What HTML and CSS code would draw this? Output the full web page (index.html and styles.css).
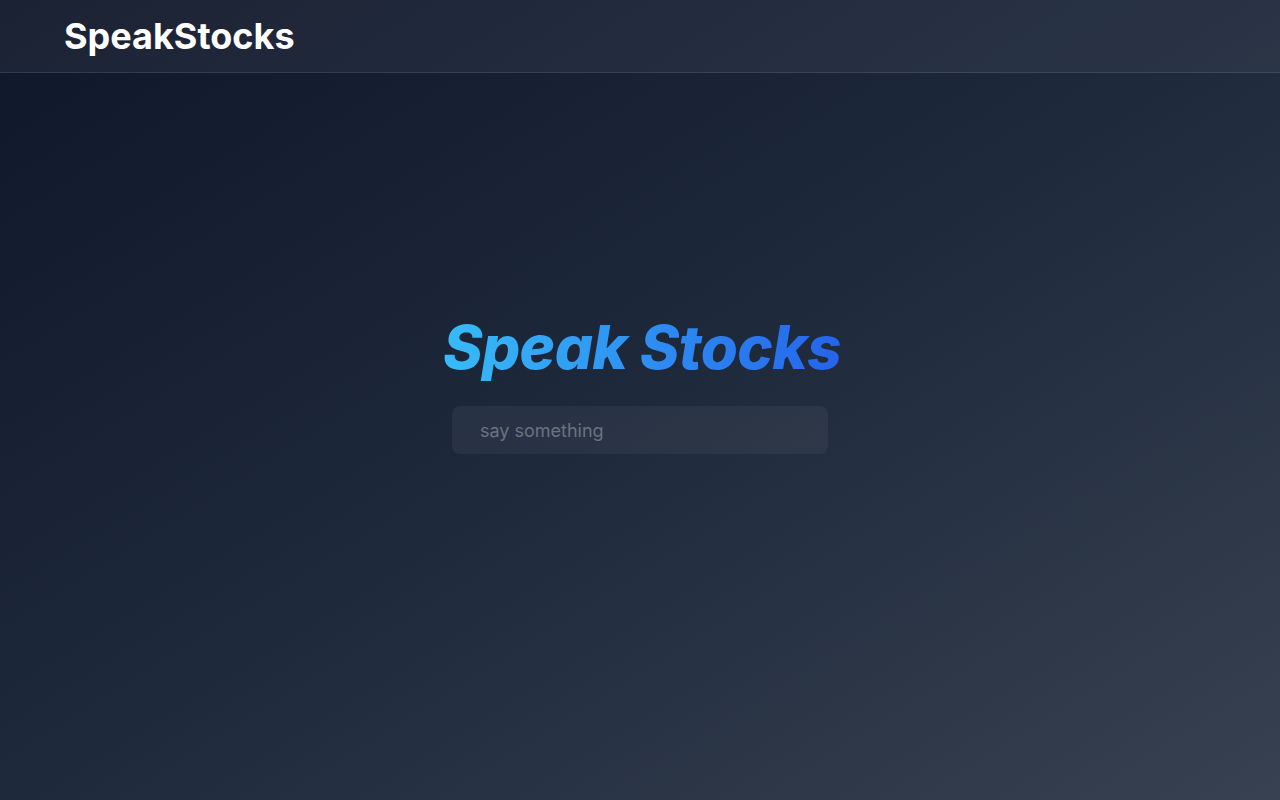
FILE: index.html
```html
<!DOCTYPE html>
<html>
<head>
<meta charset="utf-8">
<link rel="stylesheet" href="styles.css">
</head>
<body>
<div class="page">
  <header class="topbar">
    <div class="brand">SpeakStocks</div>
  </header>
  <main class="hero">
    <h1 class="title">Speak Stocks</h1>
    <input class="prompt" type="text" placeholder="say something">
  </main>
</div>
</body>
</html>
```
FILE: styles.css
```css
html, body { margin: 0; padding: 0; }
body {
  font-family: Inter, "Noto Sans", sans-serif;
  background: linear-gradient(to bottom right, #0f172a, #1e293b, #374151);
  min-height: 800px;
  color: #fff;
}
.page { display: flex; flex-direction: column; min-height: 800px; }
.topbar {
  height: 72px;
  display: flex;
  align-items: center;
  padding: 0 64px;
  background: rgba(255,255,255,0.05);
  border-bottom: 1px solid rgba(255,255,255,0.1);
}
.brand { font-size: 36px; font-weight: 700; }
.hero {
  display: flex;
  flex-direction: column;
  align-items: center;
  padding-top: 240px;
}
.title {
  margin: 0;
  font-size: 60px;
  font-weight: 800;
  font-style: oblique 14deg;
  letter-spacing: -0.6px;
  line-height: 1;
  background: linear-gradient(to right, #38bdf8, #2563eb);
  -webkit-background-clip: text;
  background-clip: text;
  color: transparent;
  padding: 4px 4px 4px 8px;
}
.prompt {
  margin-top: 25px;
  width: 376px;
  height: 48px;
  box-sizing: border-box;
  border: none;
  outline: none;
  border-radius: 8px;
  background: rgba(255,255,255,0.05);
  padding: 0 28px;
  font-family: Inter, sans-serif;
  font-size: 18px;
  color: #fff;
}
.prompt::placeholder { color: #6b7280; }
```
